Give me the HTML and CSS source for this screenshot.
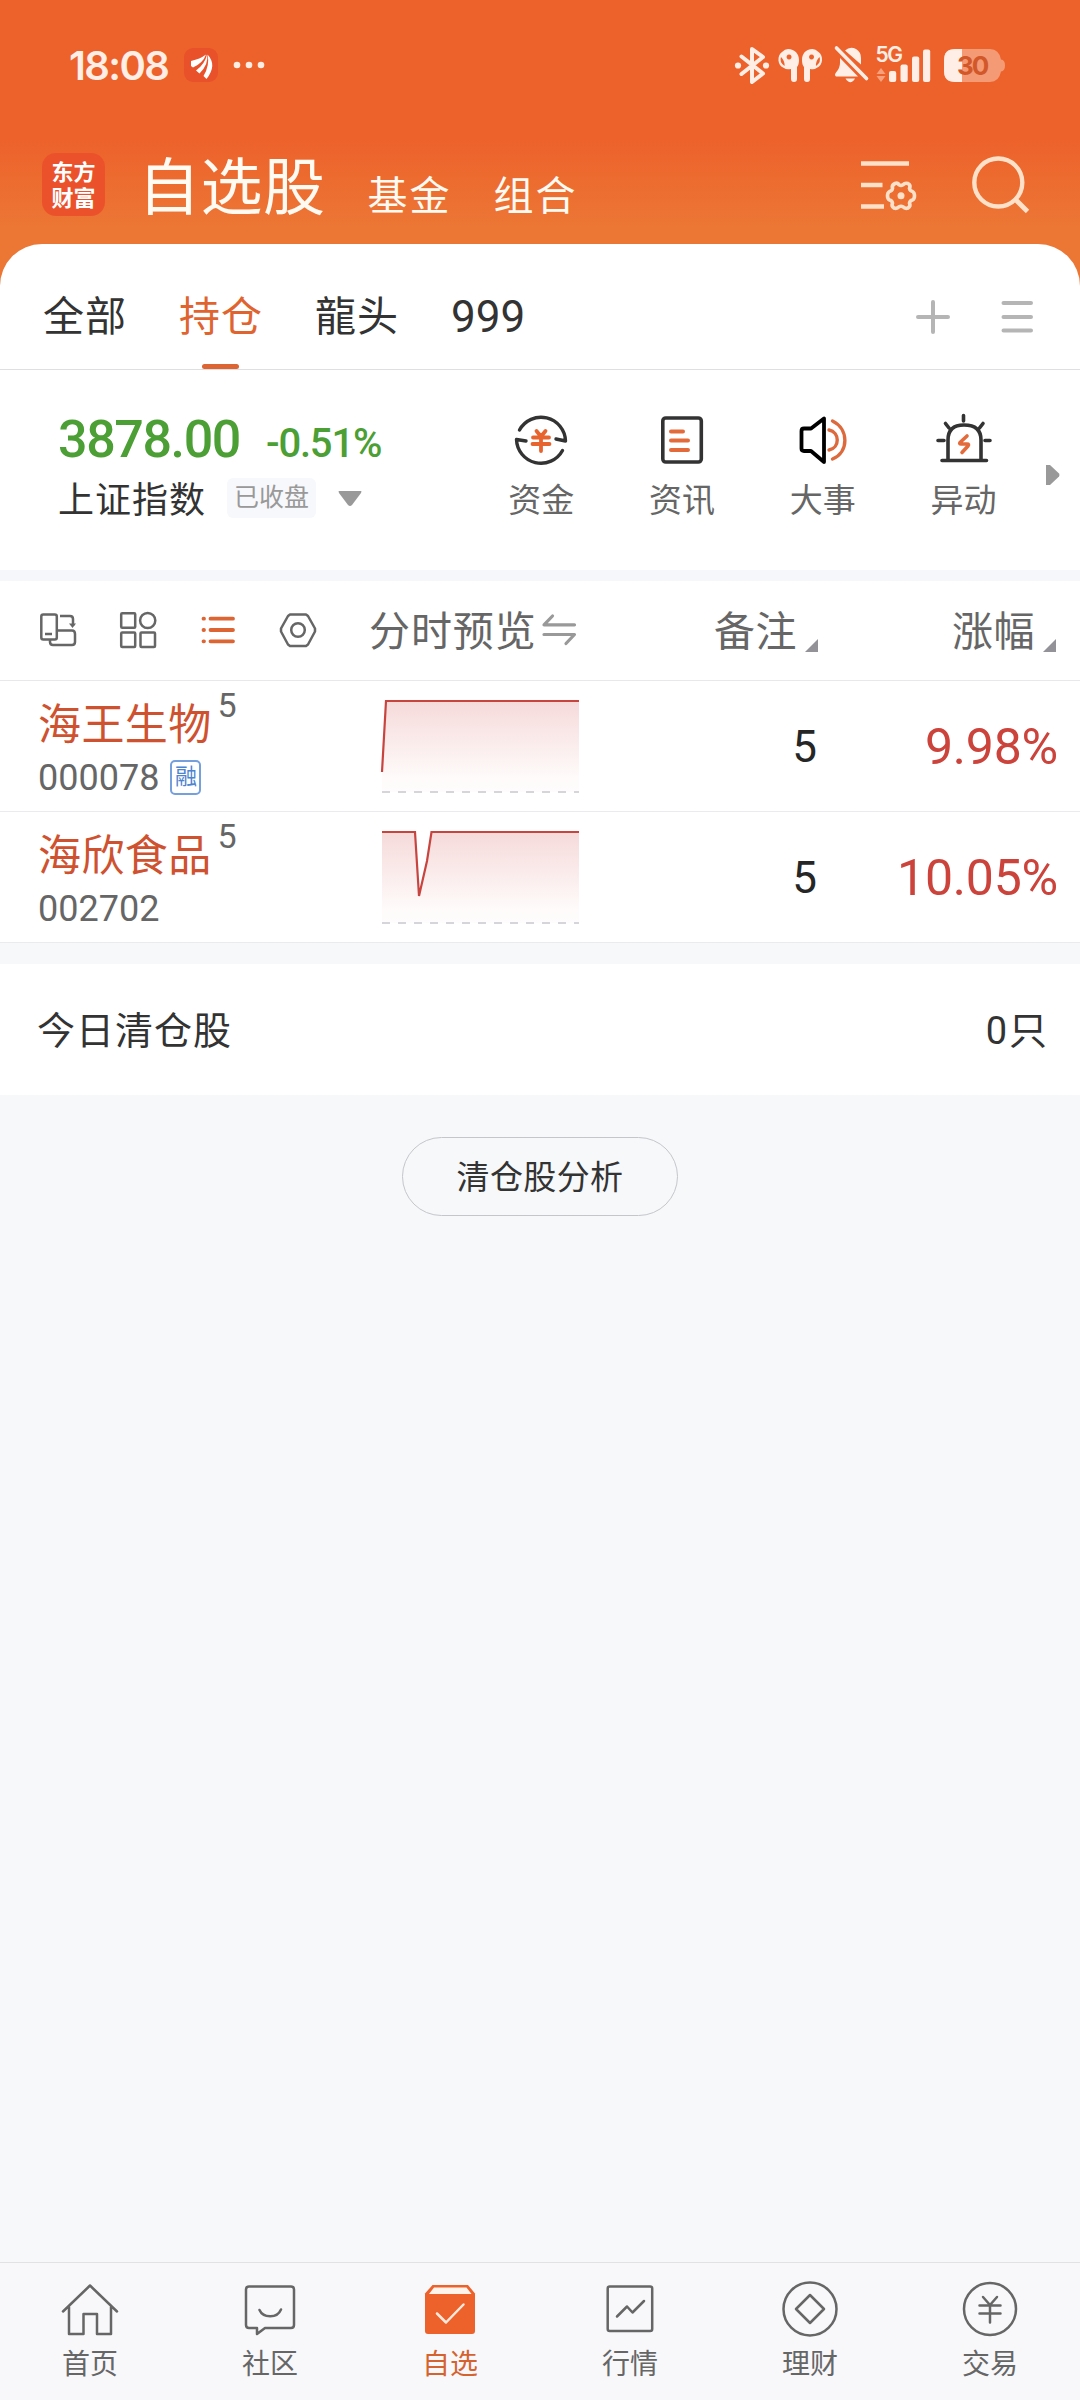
FILE: index.html
```html
<!DOCTYPE html>
<html lang="zh-CN">
<head>
<meta charset="utf-8">
<title>自选股</title>
<link rel="stylesheet" href="styles.css">
</head>
<body>
<div class="app">
  <header class="header">
    <div class="status">
      <span class="clock">18:08</span>
      <svg class="status-left" viewBox="184 48 84 36" width="84" height="36">
        <rect x="184" y="49" width="34" height="34" rx="9" fill="#e9512a"/>
        <path d="M191 62 Q200 60 206 55.500 Q203 64 193 68.500 L191 67Z M196 71.500 Q205 65 207 55.500 Q209 65 199.500 74.500Z M203.500 77 Q210 66 207.500 55.500 Q217.500 66 206.500 80Z" fill="#fff"/>
        <g fill="#ffece2"><circle cx="237" cy="66" r="3.300"/><circle cx="249" cy="66" r="3.300"/><circle cx="261" cy="66" r="3.300"/></g>
      </svg>
      <svg class="status-right" viewBox="732 42 276 46" width="276" height="46">
        <g fill="none" stroke="#ffeee6" stroke-width="4" stroke-linejoin="round" stroke-linecap="round">
          <path d="M741.500 56.500 L763 73.500 L752 82 V49 L763 57 L741.500 74"/>
        </g>
        <g fill="#ffeee6">
          <circle cx="738" cy="65.500" r="3.100"/><circle cx="766" cy="65.500" r="3.100"/>
          <path fill-rule="evenodd" d="M788 49 C795 49 799 54 799 60 Q799 65 797 67 V79 Q797 82 794 82 Q791 82 791 79 V69 Q786 70 784 68 C777 66 777 55 782 52 Q785 49 788 49Z M789 54.500 a2.500 2.500 0 1 0 .1 0Z M781 57 Q779 62 784.500 66 Q785 61 781 57Z"/>
          <path fill-rule="evenodd" d="M812.500 49 C805.500 49 802 54 802 60 Q802 65 804 67 V79 Q804 82 807 82 Q810 82 810 79 V69 Q814.500 70 816.500 68 C823.500 66 823.500 55 818.500 52 Q815.500 49 812.500 49Z M811.500 54.500 a2.500 2.500 0 1 0 .1 0Z M819.500 57 Q821.500 62 816 66 Q815.500 61 819.500 57Z"/>
          <path d="M840 58 L858 76.500 H836 Q834 75 836 72.500 Q840 68 840 63Z M845 50.500 Q850 46 856 49 Q861 52 861 58 V64.500Z M845.500 78.500 H855 Q850.500 86 845.500 78.500Z"/>
          <rect x="889" y="71" width="7.200" height="11" rx="2"/><rect x="900.500" y="64.500" width="7.200" height="17.500" rx="2"/><rect x="912" y="56.500" width="7.200" height="25.500" rx="2"/><rect x="923" y="49.500" width="7.200" height="32.500" rx="2"/>
        </g>
        <path d="M836.500 48 L866.500 78.500" stroke="#ffeee6" stroke-width="3.600" stroke-linecap="round"/>
        <path d="M881 68 L885.500 74 H876.500Z M876.500 76 H885.500 L881 82Z" fill="#f6a07c"/>
        <text class="net" x="875.500" y="61.500">5G</text>
        <path d="M955 49 H990 Q999 49 1001 59.500 Q1005 60 1005 65.500 Q1005 71 1001 71.500 Q999 82 990 82 H955 Q944 82 944 71 V60 Q944 49 955 49Z" fill="#f49a75"/>
        <path d="M962 49 H955 Q944 49 944 60 V71 Q944 82 955 82 H962Z" fill="#ffeee6"/>
        <text class="battery" x="957" y="75">30</text>
      </svg>
    </div>
    <div class="titlebar">
      <div class="logo"><span>东方</span><span>财富</span></div>
      <nav class="sections">
        <span class="section-main">自选股</span>
        <span class="section">基金</span>
        <span class="section">组合</span>
      </nav>
      <svg class="header-tools" viewBox="858 154 176 64" width="176" height="64" fill="none" stroke="#ffe0c8" stroke-width="4.400">
        <path d="M861 163.500 H909 M861 185 H882.500 M861 206.500 H884"/>
        <path d="M895 183.500 Q898 182.500 899 184.800 Q901 186 903 184.800 Q905 182.500 908 183.500 Q911 185 909.500 188.500 Q910 191 912.500 191.500 Q914.500 192.500 914.500 195.800 Q914.500 199 912.500 200 Q910 200.500 909.500 203 Q911 206 908 208 Q905 209 903 206.800 Q901 205.600 899 206.800 Q897 209 894 208 Q891 206 892.500 203 Q892 200.500 889.500 200 Q887.500 199 887.500 195.800 Q887.500 192.500 889.500 191.500 Q892 191 892.500 188.500 Q891.500 185 895 183.500Z" stroke-width="3.600"/>
        <circle cx="901" cy="195.700" r="3.500" fill="#ffe0c8" stroke="none"/>
        <circle cx="998.300" cy="182.500" r="24"/><path d="M1014.500 198.500 L1027.500 211.500" stroke-width="4.800"/>
      </svg>
    </div>
  </header>

  <section class="panel">
    <div class="tabs">
      <span class="tab">全部</span>
      <span class="tab active">持仓</span>
      <span class="tab">龍头</span>
      <span class="tab tab-num">999</span>
      <svg class="tab-tools" viewBox="914 297 122 40" width="122" height="40" stroke="#b5b5b5" stroke-width="4" stroke-linecap="round">
        <path d="M918 317 H948 M933 302 V332 M1003.500 303 H1031 M1003.500 317 H1031 M1003.500 330.500 H1031"/>
      </svg>
    </div>
    <div class="market">
      <div class="index">
        <div class="index-values"><span class="price">3878.00</span><span class="change">-0.51%</span></div>
        <div class="index-info">
          <span class="index-name">上证指数</span><span class="closed">已收盘</span>
          <svg class="caret" viewBox="0 0 26 17" width="26" height="17"><path d="M2 1 H24 Q25 1 24 3 L15 15 Q13 17 11 15 L2 3 Q1 1 2 1Z" fill="#999"/></svg>
        </div>
      </div>
      <div class="funcs">
        <div class="func">
          <svg viewBox="512 411 58 58" width="58" height="58" fill="none" stroke="#333" stroke-width="3.400" stroke-linecap="round" stroke-linejoin="round">
            <path d="M519.500 430 A24.500 24.500 0 0 1 565.500 441 L556 439 M526 441 L516.500 439.500 A24.500 24.500 0 0 0 562.500 450.500"/>
            <path d="M536.500 431 L541 436.500 L545.500 431 M533 437.500 H549 M532.500 444 H549.500 M541 437 V451" stroke="#e8642f" stroke-width="3.800"/>
          </svg><span>资金</span>
        </div>
        <div class="func">
          <svg viewBox="653 411 58 58" width="58" height="58" fill="none" stroke="#333" stroke-width="3.600" stroke-linecap="round">
            <rect x="662.800" y="418" width="38.500" height="44" rx="3"/>
            <path d="M671 431.500 H683 M671 440.500 H688 M671 450 H688" stroke="#e36b3b" stroke-width="4"/>
          </svg><span>资讯</span>
        </div>
        <div class="func">
          <svg viewBox="794 411 58 58" width="58" height="58" fill="none" stroke="#000" stroke-width="3.800" stroke-linejoin="round" stroke-linecap="round">
            <path d="M801.500 431 Q801.500 428.500 804 428.500 H811 L824 418.500 V462 L811 451 H804 Q801.500 451 801.500 448.500Z"/>
            <path d="M829 430 C840 432 840 448 829 450 M832.500 421 C849 429 849 452 832.500 459" stroke="#dc6a3c" stroke-width="3.400"/>
          </svg><span>大事</span>
        </div>
        <div class="func">
          <svg viewBox="934 411 58 58" width="58" height="58" fill="none" stroke="#333" stroke-width="3.600" stroke-linecap="round" stroke-linejoin="round">
            <path d="M948 459 V440 Q948 425 964 425 Q981 425 981 440 V459 M942 460.500 H986.500 M963.500 415.500 V421 M945.500 423.500 L949 428 M983 423.500 L979.500 428 M938 440.500 H944 M985 440.500 H990"/>
            <path d="M967 436 L960 442.500 Q959 444 961 444 H967 Q969.500 444 968 446 L962 452.500" stroke="#e36b3b"/>
          </svg><span>异动</span>
        </div>
      </div>
      <svg class="more" viewBox="0 0 14 22" width="14" height="22"><path d="M0 1 H4 L13 9.500 Q14 11 13 12.500 L4 21 H0Z" fill="#999"/></svg>
    </div>
  </section>

  <section class="watch">
    <div class="watch-head">
      <svg class="view-icons" viewBox="38 606 280 48" width="280" height="48" fill="none" stroke="#666" stroke-width="2.500" stroke-linejoin="round">
        <rect x="41.300" y="614.500" width="15.500" height="25" rx="2"/>
        <path d="M45 634 H52 M60 616 H70 Q73 616 73 619 V626 M50 640 V642 Q50 645 53 645 H72 Q75 645 75 642 V634 Q75 630.500 72 630.500 H57"/>
        <path d="M69 623.500 H76 L72.500 628Z" fill="#666" stroke="none"/>
        <rect x="121.200" y="613.200" width="14" height="14.500" rx="1"/><rect x="121.200" y="632.500" width="14" height="14.500" rx="1"/><rect x="140.500" y="632.500" width="14.500" height="14.500" rx="1"/><circle cx="147.700" cy="620.500" r="7.600"/>
        <g stroke="#dd6533" stroke-width="3.800" stroke-linecap="round"><path d="M210.500 618.700 H233 M210.500 630 H233 M210.500 641.300 H233 M203.500 618.700 H204 M203.500 630 H204 M203.500 641.300 H204"/></g>
        <path d="M290 614.500 H306 L308 616 L315 628.500 V631.500 L308 644.500 L306 646 H290 L288 644.500 L281 631.500 V628.500 L288 616Z"/><circle cx="298" cy="630" r="6.800"/>
      </svg>
      <span class="col-preview">分时预览</span>
      <svg class="swap" viewBox="541 611 37 36" width="37" height="36" fill="none" stroke="#999" stroke-width="3.200" stroke-linecap="round" stroke-linejoin="round"><path d="M552.500 615 L544 623.800 H574.500 M544 633.500 H574.500 L566 642.500"/></svg>
      <span class="col-note">备注</span><i class="sort"></i>
      <span class="col-rate">涨幅</span><i class="sort"></i>
    </div>

    <div class="stock">
      <div class="stock-id">
        <div class="name">海王生物<sup>5</sup></div>
        <div class="code">000078<span class="margin-tag">融</span></div>
      </div>
      <svg class="trend" viewBox="380 681 200 130" width="200" height="130">
        <defs><linearGradient id="fade" x1="0" y1="0" x2="0" y2="1"><stop offset="0" stop-color="#f6dada"/><stop offset=".85" stop-color="#fefbfa"/><stop offset="1" stop-color="#fefcfc"/></linearGradient></defs>
        <path d="M382 772 L386 701 H579 V792 H382Z" fill="url(#fade)"/>
        <path d="M382 772 L386 701 H579" fill="none" stroke="#c8453f" stroke-width="2.200"/>
        <path d="M382 792 H579" stroke="#d6d6da" stroke-width="2" stroke-dasharray="8 8"/>
      </svg>
      <span class="note">5</span><span class="rate">9.98%</span>
    </div>
    <div class="stock">
      <div class="stock-id">
        <div class="name">海欣食品<sup>5</sup></div>
        <div class="code">002702</div>
      </div>
      <svg class="trend" viewBox="380 812 200 130" width="200" height="130">
        <path d="M382 832 H415 L419 896 L427 861 L431.500 832 H579 V923 H382Z" fill="url(#fade)"/>
        <path d="M382 832 H415 L419 896 L427 861 L431.500 832 H579" fill="none" stroke="#c8453f" stroke-width="2.200"/>
        <path d="M382 923 H579" stroke="#d6d6da" stroke-width="2" stroke-dasharray="8 8"/>
      </svg>
      <span class="note">5</span><span class="rate">10.05%</span>
    </div>
  </section>

  <section class="cleared"><span>今日清仓股</span><span class="count"><b>0</b>只</span></section>
  <button class="analyze">清仓股分析</button>

  <nav class="bottom">
    <div class="nav-item">
      <svg viewBox="60 2280 60 60" width="60" height="60"><path d="M63 2311.500 L90 2285.500 L117 2311.500 M69 2307 V2334 H83.500 V2314 H97 V2334 H111 V2307"/></svg><span>首页</span>
    </div>
    <div class="nav-item">
      <svg viewBox="240 2280 60 60" width="60" height="60"><path d="M249 2286.500 H291 Q294 2286.500 294 2289.500 V2325 Q294 2328 291 2328 H265 L257 2334 V2328 H249 Q246 2328 246 2325 V2289.500 Q246 2286.500 249 2286.500Z M259.500 2310 C263 2318 277 2319 281 2309.500"/></svg><span>社区</span>
    </div>
    <div class="nav-item selected">
      <svg viewBox="420 2280 60 60" width="60" height="60"><path class="solid" d="M432.500 2285 H468 L475 2293.500 V2331 Q475 2334 472 2334 H428 Q425 2334 425 2331 V2293.500Z"/><path class="lid" d="M434 2287.500 H466.500 L471.500 2294 H429Z"/><path class="tick" d="M437 2313.500 L446 2322.500 L463.500 2304.500"/></svg><span>自选</span>
    </div>
    <div class="nav-item">
      <svg viewBox="600 2280 60 60" width="60" height="60"><rect x="607.700" y="2286.500" width="44.500" height="44.500" rx="2"/><path d="M617 2316.500 L627 2306.500 L632.500 2312.500 L644 2301"/></svg><span>行情</span>
    </div>
    <div class="nav-item">
      <svg viewBox="780 2280 60 60" width="60" height="60"><circle cx="810" cy="2309" r="26.500"/><path d="M810 2295 L824 2309 L810 2323 L796 2309Z"/></svg><span>理财</span>
    </div>
    <div class="nav-item">
      <svg viewBox="960 2280 60 60" width="60" height="60"><circle cx="990" cy="2309" r="26"/><path d="M983 2297 L990 2305 L997 2297 M979.500 2305.500 H1000.500 M979.500 2313.500 H1000.500 M990 2305 V2322.500"/></svg><span>交易</span>
    </div>
  </nav>
</div>
</body>
</html>
```
FILE: styles.css
```css
* { box-sizing: border-box; }
body { margin: 0; font-family: Roboto, "Noto Sans CJK SC", sans-serif; color: #333; }
svg { display: block; flex: none; }
span { white-space: nowrap; }
.app { width: 1080px; height: 2400px; display: flex; flex-direction: column; background: linear-gradient(#ed622b 0, #ed622b 140px, #ec7735 230px, #ec7735 300px, #f7f8fa 300px); }

.header { height: 244px; }
.status { height: 130px; display: flex; align-items: center; padding: 0 72px 0 69px; }
.clock { font: 600 40px/50px Inter, sans-serif; width: 115px; color: #ffeee6; letter-spacing: -1.600px; padding-top: 2px; }
.status-right { margin-left: auto; }
.net { font: 600 21px Inter, sans-serif; fill: #ffeee6; letter-spacing: -1.500px; }
.battery { font: 700 26px Inter, sans-serif; fill: #d2582a; letter-spacing: -2px; }
.titlebar { display: flex; height: 112px; align-items: center; padding: 0 46px 0 42px; }
.logo { width: 63px; height: 63px; margin-top: -3px; border-radius: 14px; background: #eb522b; color: #fff; font: 700 22px/26px "Noto Sans CJK SC", sans-serif; padding-top: 4px; display: flex; flex-direction: column; align-items: center; }
.sections { display: flex; align-items: baseline; color: #fffaf2; margin-left: 33px; padding-top: 5px; }
.section-main { font-size: 62px; line-height: 80px; letter-spacing: .5px; }
.section { font-size: 40px; letter-spacing: 2px; margin-left: 42px; }
.header-tools { margin-left: auto; }

.panel { height: 326px; background: #fff; border-radius: 42px 42px 0 0; }
.tabs { height: 126px; border-bottom: 1px solid #dfdfe2; display: flex; align-items: center; padding: 0 44px 0 43px; gap: 52px; font-size: 41px; letter-spacing: 1px; }
.tab { position: relative; height: 124px; line-height: 145px; }
.active { color: #e0642f; }
.active::after { content: ""; position: absolute; left: 23px; bottom: 0; width: 37px; height: 5px; border-radius: 3px; background: #dd6533; }
.tab-num { font-size: 44px; letter-spacing: 0; }
.tab-tools { margin: 21px 0 0 auto; }
.market { height: 200px; display: flex; }
.index { width: 440px; padding: 43px 0 0 58px; }
.index-values { display: flex; align-items: baseline; color: #4b9f35; height: 57px; }
.price { font-size: 52px; line-height: 54px; font-weight: 500; letter-spacing: -1.400px; width: 208px; }
.change { font-size: 40px; font-weight: 500; letter-spacing: -1.200px; }
.index-info { display: flex; align-items: center; height: 56px; }
.index-name { font-size: 36px; width: 169px; letter-spacing: 1px; margin-top: -2px; }
.closed { width: 89px; height: 40px; border-radius: 6px; background: #f7f8fb; color: #999; font-size: 25px; line-height: 40px; text-align: center; }
.caret { margin-left: 21px; }
.funcs { display: flex; padding-top: 41px; margin-left: 31px; }
.func { width: 140.700px; display: flex; flex-direction: column; align-items: center; font-size: 33px; line-height: 50px; color: #666; gap: 7px; }
.more { margin: 94px 0 0 12px; }

.watch { border-top: 11px solid #f6f7fa; background: #fff; }
.watch-head { height: 100px; border-bottom: 1px solid #e8e8ea; display: flex; align-items: center; padding: 0 0 2px 38px; color: #666; font-size: 41px; letter-spacing: .5px; }
.col-preview { margin: -4px 0 0 51px; width: 172px; letter-spacing: .9px; }
.col-note { margin: -4px 0 0 136px; }
.col-rate { margin: -4px 0 0 134px; }
.sort { width: 13px; height: 13px; margin: 32px 0 0 8px; background: #929298; clip-path: polygon(100% 0, 100% 100%, 0 100%); }
.stock { height: 131px; border-bottom: 1px solid #ebebed; display: flex; align-items: center; padding-right: 22px; }
.stock-id { width: 380px; padding-left: 38px; align-self: stretch; }
.name { font-size: 43px; line-height: 64px; height: 76px; padding-top: 12px; color: #cf5230; display: flex; letter-spacing: .4px; }
.name sup { font-size: 34px; line-height: 30px; color: #666; margin: -3px 0 0 6px; }
.code { font-size: 36px; line-height: 44px; color: #666; display: flex; align-items: center; height: 41px; letter-spacing: 0; }
.margin-tag { width: 31px; height: 35px; border: 2px solid #75a0dc; border-radius: 5px; color: #4d84cf; font-size: 22px; line-height: 30px; text-align: center; margin-left: 11px; }
.note { width: 237px; text-align: right; font-size: 44px; color: #262626; padding-top: 2px; }
.rate { margin-left: auto; font-size: 50px; color: #cb433b; letter-spacing: -.200px; padding-top: 2px; }

.cleared { height: 131px; margin-top: 21px; background: #fff; display: flex; align-items: center; justify-content: space-between; padding: 0 32px 5px 37px; font-size: 38px; letter-spacing: 1px; }
.count b { font-weight: 400; margin-right: 1px; }
.analyze { width: 276px; height: 79px; margin: 42px auto 0; border: 1.500px solid #c4c6ca; border-radius: 40px; background: none; color: #333; font: 33px "Noto Sans CJK SC", sans-serif; padding: 0 0 3px; white-space: nowrap; letter-spacing: .4px; }

.bottom { margin-top: auto; height: 138px; border-top: 1px solid #e2e2e5; background: #f8f8fb; display: flex; }
.nav-item { width: 180px; padding-top: 17px; display: flex; flex-direction: column; align-items: center; font-size: 28px; line-height: 40px; color: #666; gap: 5px; }
.nav-item svg { fill: none; stroke: #666; stroke-width: 2.500; stroke-linejoin: round; stroke-linecap: round; }
.selected { color: #d5632f; }
.selected .solid { fill: #ed622b; stroke: none; }
.selected .lid { fill: #fff4ec; stroke: none; }
.selected .tick { stroke: #ffe9dc; }
```
